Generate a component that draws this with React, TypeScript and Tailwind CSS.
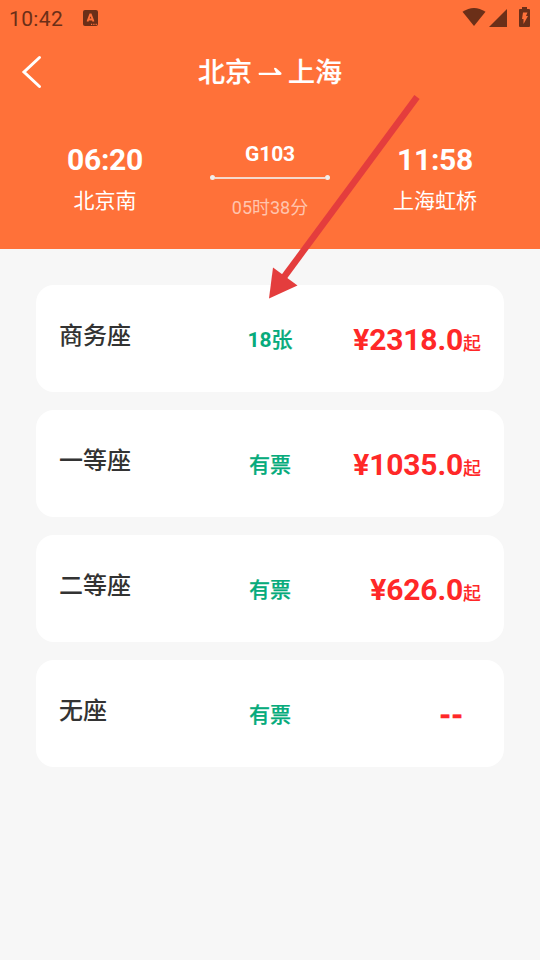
const seats = [
  { name: '商务座', count: '18', stock: '张', price: '¥2318.0' },
  { name: '一等座', stock: '有票', price: '¥1035.0' },
  { name: '二等座', stock: '有票', price: '¥626.0' },
  { name: '无座', stock: '有票', price: null },
];

function StatusBar() {
  return (
    <div className="flex h-9 items-center justify-between pl-[9px] pr-[10px] text-[#6b2f18]">
      <div className="flex items-center">
        <span className="w-[74px] text-[21px] leading-9 tracking-[0.35px] pt-0.5">10:42</span>
        <svg width="15" height="16" viewBox="0 0 15 16">
          <rect width="15" height="16" rx="2" fill="currentColor" />
          <path d="M4.500 11.500 7.200 4.500h.6l2.700 7M5.300 9.500h4.400" fill="none" stroke="#ff7139" strokeWidth="1.900" />
          <path d="M8 14.300h1.200M10.300 14.300h1.200M12.600 14.300h1.200" stroke="#ff7139" strokeWidth="1.200" />
        </svg>
      </div>
      <div className="flex items-center">
        <svg className="-mt-0.5" width="24" height="20" viewBox="0 0 24 20">
          <path d="M.5 4.800Q12-2.800 23.500 4.800L12 19Z" fill="currentColor" />
        </svg>
        <svg className="ml-[3px]" width="18" height="18" viewBox="0 0 18 18">
          <path d="M18 0v18H0Z" fill="currentColor" />
        </svg>
        <svg className="ml-3 -mt-0.5" width="11" height="20" viewBox="0 0 11 20">
          <path d="M3 0h5v2h2q1 0 1 1v16q0 1-1 1H1q-1 0-1-1V3q0-1 1-1h2Z" fill="currentColor" />
          <path d="M4 5.500h4.500L7 9h2L4.500 17v-5H3Z" fill="#ff7139" />
        </svg>
      </div>
    </div>
  );
}

function Station({ time, name }: { time: string; name: string }) {
  return (
    <div className="flex w-[210px] flex-col items-center pt-1.5">
      <span className="text-[30px] leading-9 font-bold tracking-[-0.25px]">{time}</span>
      <span className="mt-2 text-[21px] leading-[30px]">{name}</span>
    </div>
  );
}

export default function App() {
  return (
    <div className="relative h-[960px] w-[540px] overflow-hidden bg-[#f7f7f7] font-[Roboto,'Noto_Sans_CJK_SC',sans-serif]">
      <header className="h-[249px] bg-[#ff7139] text-white">
        <StatusBar />

        <div className="flex h-[72px] items-center">
          <button className="flex w-[60px] justify-start pl-[21px]">
            <svg width="22" height="34" viewBox="0 0 22 34">
              <path d="M18.500 2.500 3 17l15.500 14.500" fill="none" stroke="currentColor" strokeWidth="3" strokeLinecap="round" />
            </svg>
          </button>
          <h1 className="flex flex-1 items-center justify-center text-[27px] font-medium [-webkit-text-stroke:0.2px_white]">
            <span className="pt-0.5">北京</span>
            <svg className="mx-[6px]" width="24" height="10" viewBox="0 0 24 10">
              <path d="M1 5.700h17L16 1.700Q16 0 18 1l5.500 5q.5 2-1.500 2H1q-1-1.200 0-2.300Z" fill="currentColor" />
            </svg>
            <span className="pt-0.5">上海</span>
          </h1>
          <div className="w-[60px]" />
        </div>

        <div className="flex pt-7">
          <Station time="06:20" name="北京南" />
          <div className="flex w-[120px] flex-col items-center">
            <span className="text-[21px] leading-9 font-bold tracking-[-0.1px]">G103</span>
            <div className="mt-[3px] flex w-full items-center">
              <i className="size-[5px] rounded-full bg-[#f1eeec]" />
              <i className="h-[2px] flex-1 bg-[#f6d9cd]" />
              <i className="size-[5px] rounded-full bg-[#f1eeec]" />
            </div>
            <span className="mt-[14px] text-[18px] leading-[27px] text-white/60">05时38分</span>
          </div>
          <Station time="11:58" name="上海虹桥" />
        </div>
      </header>

      <main className="flex flex-col gap-[18px] px-9 pt-9">
        {seats.map((seat) => (
          <div key={seat.name} className="grid h-[107px] grid-cols-[156px_156px_1fr] rounded-[18px] bg-white">
            <span className="pt-[33px] pl-[23px] text-[24px] leading-9 font-medium text-[#333]">{seat.name}</span>
            <span className="pt-[37px] text-center text-[21px] leading-9 font-medium text-[#07ab7c] [-webkit-text-stroke:0.25px_#07ab7c]">
              {seat.count && <b className="font-bold [-webkit-text-stroke:0]">{seat.count}</b>}
              {seat.stock}
            </span>
            <div className="flex items-baseline justify-end pt-[37px] pr-[23px] text-[#ff2828]">
              {seat.price ? (
                <span className="text-[30px] leading-9 font-bold tracking-[-0.15px]">{seat.price}</span>
              ) : (
                <span className="text-[30px] leading-9 font-bold [-webkit-text-stroke:0.4px_#ff2828]">--</span>
              )}
              <span className="w-[18px] text-[18px] leading-9 font-medium">{seat.price && '起'}</span>
            </div>
          </div>
        ))}
      </main>

      {/* Pointer to the first seat's stock */}
      <svg className="pointer-events-none absolute top-0 left-0" width="540" height="320" viewBox="0 0 540 320">
        <path d="M417 97 284 277" stroke="#e43d3d" strokeWidth="6.500" />
        <path d="M269 298.500 273 267.500 297.500 285.500Z" fill="#e43d3d" />
      </svg>
    </div>
  );
}
